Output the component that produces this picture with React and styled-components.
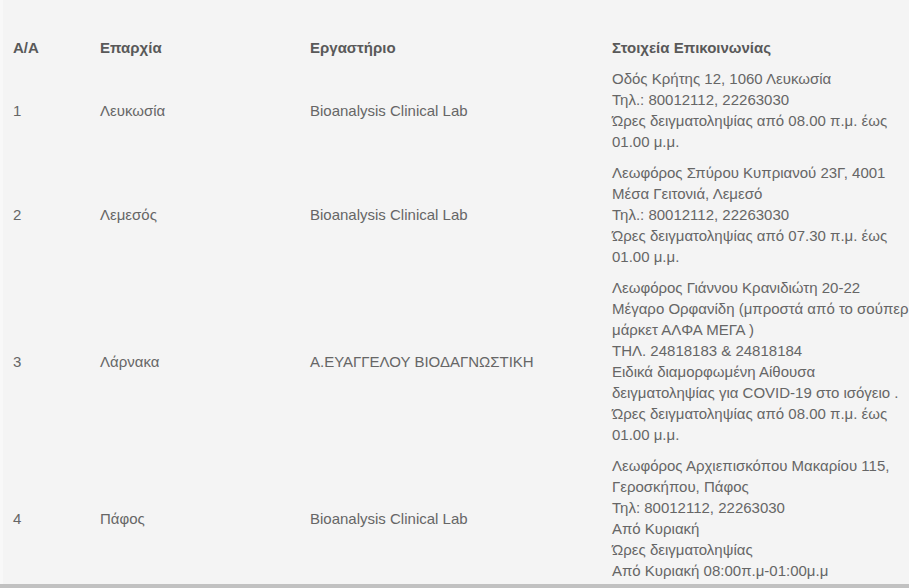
import React from 'react'
import styled, { createGlobalStyle } from 'styled-components'

const GlobalStyle = createGlobalStyle`
  html, body {
    margin: 0;
    padding: 0;
    background: #f4f4f4;
    overflow: hidden;
  }
  body {
    font-family: "Liberation Sans", Arial, sans-serif;
    font-size: 15px;
    color: #666;
  }
`

const Page = styled.div`
  min-height: 588px;
  border-left: 3px solid #f8f8f8;
  padding-top: 32px;
  box-sizing: border-box;
`

const Table = styled.table`
  border-collapse: collapse;
  table-layout: fixed;
  width: 919px;
  line-height: 21px;
`

const HeadCell = styled.th`
  width: ${p => p.$width}px;
  padding: 5px 10px;
  text-align: left;
  font-weight: bold;
  color: #595959;
  box-sizing: border-box;
`

const Cell = styled.td`
  padding: 5px 10px;
  text-align: left;
  vertical-align: middle;
`

const Lines = styled.div`
  white-space: nowrap;
`

const Scrollbar = styled.div`
  position: fixed;
  left: 0;
  right: 0;
  bottom: 0;
  height: 4px;
  background: #c1c1c1;
`

const columns = [
  { label: 'Α/Α', width: 87 },
  { label: 'Επαρχία', width: 210 },
  { label: 'Εργαστήριο', width: 302 },
  { label: 'Στοιχεία Επικοινωνίας', width: 320 },
]

const rows = [
  {
    id: 1,
    area: 'Λευκωσία',
    lab: 'Bioanalysis Clinical Lab',
    contact: [
      'Οδός Κρήτης 12, 1060 Λευκωσία',
      'Τηλ.: 80012112, 22263030',
      'Ώρες δειγματοληψίας από 08.00 π.μ. έως',
      '01.00 μ.μ.',
    ],
  },
  {
    id: 2,
    area: 'Λεμεσός',
    lab: 'Bioanalysis Clinical Lab',
    contact: [
      'Λεωφόρος Σπύρου Κυπριανού 23Γ, 4001',
      'Μέσα Γειτονιά, Λεμεσό',
      'Τηλ.: 80012112, 22263030',
      'Ώρες δειγματοληψίας από 07.30 π.μ. έως',
      '01.00 μ.μ.',
    ],
  },
  {
    id: 3,
    area: 'Λάρνακα',
    lab: 'Α.ΕΥΑΓΓΕΛΟΥ ΒΙΟΔΑΓΝΩΣΤΙΚΗ',
    contact: [
      'Λεωφόρος Γιάννου Κρανιδιώτη 20-22',
      'Μέγαρο Ορφανίδη (μπροστά από το σούπερ',
      'μάρκετ ΑΛΦΑ ΜΕΓΑ )',
      'ΤΗΛ. 24818183 & 24818184',
      'Ειδικά διαμορφωμένη Αίθουσα',
      'δειγματοληψίας για COVID-19 στο ισόγειο .',
      'Ώρες δειγματοληψίας από 08.00 π.μ. έως',
      '01.00 μ.μ.',
    ],
  },
  {
    id: 4,
    area: 'Πάφος',
    lab: 'Bioanalysis Clinical Lab',
    contact: [
      'Λεωφόρος Αρχιεπισκόπου Μακαρίου 115,',
      'Γεροσκήπου, Πάφος',
      'Τηλ: 80012112, 22263030',
      'Από Κυριακή',
      'Ώρες δειγματοληψίας',
      'Από Κυριακή 08:00π.μ-01:00μ.μ',
    ],
  },
]

export default function App() {
  return (
    <>
      <GlobalStyle />
      <Page>
        <Table>
          <thead>
            <tr>
              {columns.map(col => (
                <HeadCell key={col.label} $width={col.width}>{col.label}</HeadCell>
              ))}
            </tr>
          </thead>
          <tbody>
            {rows.map(row => (
              <tr key={row.id}>
                <Cell>{row.id}</Cell>
                <Cell>{row.area}</Cell>
                <Cell>{row.lab}</Cell>
                <Cell>
                  <Lines>
                    {row.contact.map((line, i) => (
                      <React.Fragment key={i}>
                        {i > 0 && <br />}
                        {line}
                      </React.Fragment>
                    ))}
                  </Lines>
                </Cell>
              </tr>
            ))}
          </tbody>
        </Table>
      </Page>
      <Scrollbar />
    </>
  )
}
